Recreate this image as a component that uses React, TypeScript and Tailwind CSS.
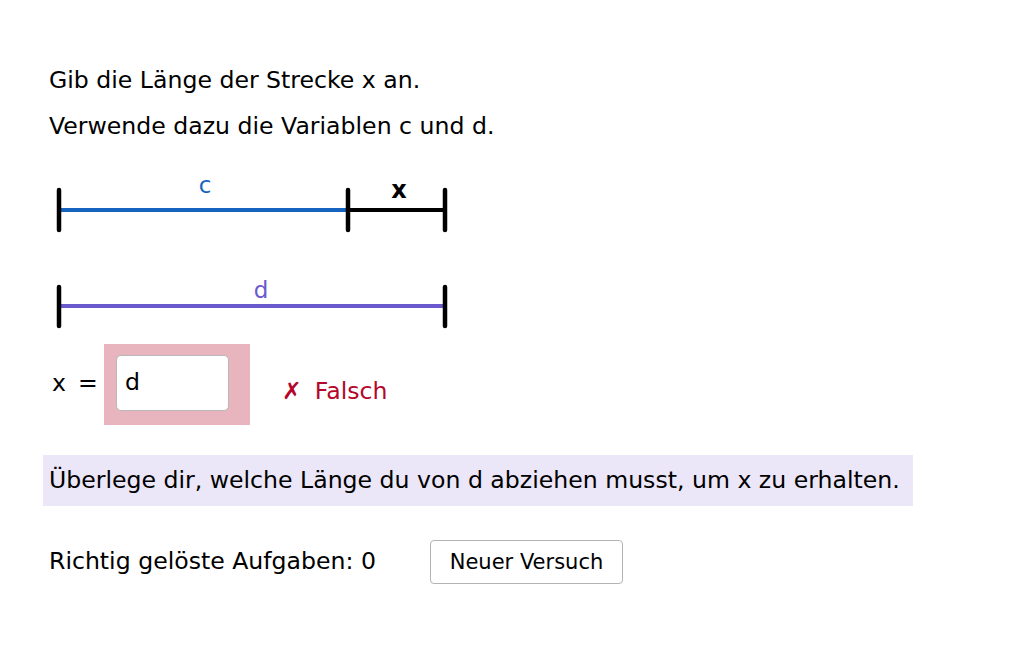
import React from "react";

export default function App() {
  return (
    <div className="w-[1032px] h-[645px] bg-white text-black font-['DejaVu_Sans',sans-serif] overflow-hidden">
      <div className="flex flex-col">
        <div className="pl-[49px] pt-[57px] text-[23.6px] leading-[46px]">
          <div>Gib die Länge der Strecke x an.</div>
          <div>Verwende dazu die Variablen c und d.</div>
        </div>
        <svg width="460" height="170" viewBox="0 0 460 170" className="mt-[22px] block">
          <line x1="59" y1="39" x2="348" y2="39" stroke="#1565c0" strokeWidth="4" />
          <line x1="348" y1="39" x2="445" y2="39" stroke="#000" strokeWidth="4" />
          <line x1="59" y1="19" x2="59" y2="59" stroke="#000" strokeWidth="4.5" strokeLinecap="round" />
          <line x1="348" y1="19" x2="348" y2="59" stroke="#000" strokeWidth="4.5" strokeLinecap="round" />
          <line x1="445" y1="19" x2="445" y2="59" stroke="#000" strokeWidth="4.5" strokeLinecap="round" />
          <text x="205" y="22" textAnchor="middle" fill="#1565c0" fontSize="23" fontFamily="DejaVu Sans, sans-serif">c</text>
          <text x="399" y="27" textAnchor="middle" fill="#000" fontSize="24" fontWeight="700" fontFamily="DejaVu Sans, sans-serif">x</text>
          <line x1="59" y1="135" x2="445" y2="135" stroke="#6a5acd" strokeWidth="4" />
          <line x1="59" y1="116" x2="59" y2="155" stroke="#000" strokeWidth="4.5" strokeLinecap="round" />
          <line x1="445" y1="116" x2="445" y2="155" stroke="#000" strokeWidth="4.5" strokeLinecap="round" />
          <text x="261" y="127" textAnchor="middle" fill="#6a5acd" fontSize="23" fontFamily="DejaVu Sans, sans-serif">d</text>
        </svg>
        <div className="flex items-center mt-[3px] h-[81px]">
          <div className="pl-[52px] w-[104px] text-[23.6px] flex items-center -mt-[2px]">
            <span>x</span>
            <span className="ml-[12px]">=</span>
          </div>
          <div className="w-[146px] h-[81px] bg-[#e8b4bd] pl-[12px] pt-[11px]">
            <div className="w-[113px] h-[56px] bg-white rounded-[5px] border border-[#b8b8b8] flex items-center pl-[8px] text-[23.6px]">
              d
            </div>
          </div>
          <div className="ml-[32px] mt-[14px] text-[23.6px] text-[#b5062b] flex items-center">
            <span className="font-bold mr-[13px]">✗</span>
            <span>Falsch</span>
          </div>
        </div>
        <div className="ml-[43px] mt-[30px] w-[870px] h-[51px] bg-[#ebe7f8] flex items-center pl-[6px] text-[23.6px] whitespace-nowrap">
          Überlege dir, welche Länge du von d abziehen musst, um x zu erhalten.
        </div>
        <div className="flex items-center mt-[34px] h-[44px]">
          <div className="pl-[49px] w-[430px] text-[23.6px] whitespace-nowrap">Richtig gelöste Aufgaben: 0</div>
          <button className="w-[193px] h-[44px] border border-[#b3b3b3] rounded-[4px] bg-white text-[21px] flex items-center justify-center pt-[2px]">
            Neuer Versuch
          </button>
        </div>
      </div>
    </div>
  );
}
